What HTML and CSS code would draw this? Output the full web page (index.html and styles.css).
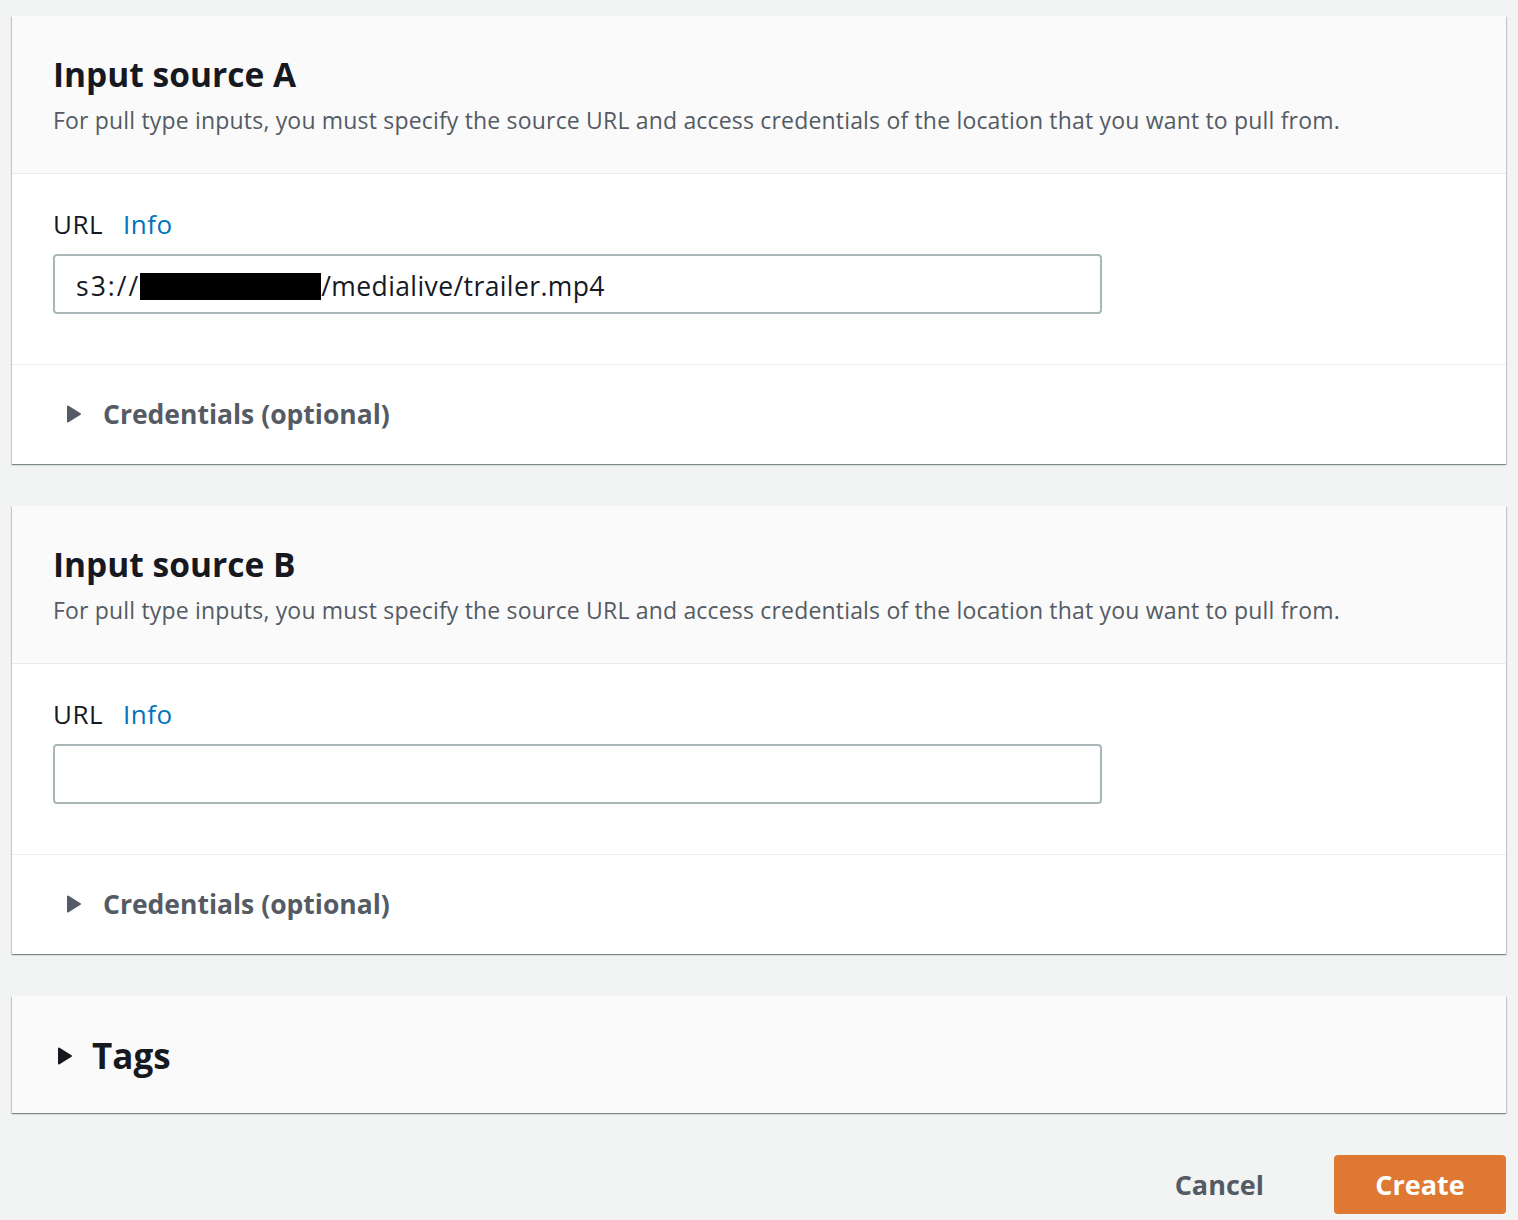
FILE: index.html
```html
<!DOCTYPE html>
<html lang="en">
<head>
<meta charset="utf-8">
<title>Create input</title>
<link rel="stylesheet" href="styles.css">
</head>
<body>
<main class="page">
  <section class="card">
    <header class="card-header">
      <h2 class="card-title">Input source A</h2>
      <p class="card-desc">For pull type inputs, you must specify the source URL and access credentials of the location that you want to pull from.</p>
    </header>
    <div class="card-body">
      <div class="field-label"><span class="label-text">URL</span><a class="info" href="#">Info</a></div>
      <div class="input"><span>s3://</span><span class="redact"></span><span>/medialive/trailer.mp4</span></div>
    </div>
    <div class="expander">
      <svg class="caret" viewBox="0 0 16 20" width="16" height="20"><path d="M2 2.5 L14 10 L2 17.5 Z" fill="currentColor" stroke="currentColor" stroke-width="2" stroke-linejoin="round"/></svg>
      <span class="expander-text">Credentials (optional)</span>
    </div>
  </section>

  <section class="card">
    <header class="card-header">
      <h2 class="card-title">Input source B</h2>
      <p class="card-desc">For pull type inputs, you must specify the source URL and access credentials of the location that you want to pull from.</p>
    </header>
    <div class="card-body">
      <div class="field-label"><span class="label-text">URL</span><a class="info" href="#">Info</a></div>
      <div class="input"></div>
    </div>
    <div class="expander">
      <svg class="caret" viewBox="0 0 16 20" width="16" height="20"><path d="M2 2.5 L14 10 L2 17.5 Z" fill="currentColor" stroke="currentColor" stroke-width="2" stroke-linejoin="round"/></svg>
      <span class="expander-text">Credentials (optional)</span>
    </div>
  </section>

  <section class="card card-tags">
    <div class="tags-row">
      <svg class="caret caret-dark" viewBox="0 0 16 20" width="16" height="20"><path d="M2 2.5 L14 10 L2 17.5 Z" fill="currentColor" stroke="currentColor" stroke-width="2" stroke-linejoin="round"/></svg>
      <span class="tags-text">Tags</span>
    </div>
  </section>

  <div class="actions">
    <button class="btn-link">Cancel</button>
    <button class="btn-primary">Create</button>
  </div>
</main>
</body>
</html>
```

FILE: styles.css
```css
* { box-sizing: border-box; }
html, body { margin: 0; padding: 0; }
body {
  background: #f2f3f3;
  font-family: "Open Sans", "Noto Sans", sans-serif;
  color: #16191f;
}
.page {
  padding: 16px 12px 0 12px;
  display: flex;
  flex-direction: column;
  gap: 42px;
}
.card {
  background: #ffffff;
  box-shadow: 0 1px 1px 0 rgba(0,28,36,0.3), 1px 1px 1px 0 rgba(0,28,36,0.15), -1px 1px 1px 0 rgba(0,28,36,0.15);
}
.card-header {
  background: #fafafa;
  border-bottom: 1px solid #eaeded;
  padding: 36px 41px 38px;
}
.card-title {
  margin: 0;
  font-size: 33.5px;
  line-height: 44px;
  font-weight: 700;
  color: #16191f;
}
.card-desc {
  margin: 9px 0 0;
  font-size: 23px;
  line-height: 30px;
  letter-spacing: 0.18px;
  color: #545b64;
}
.card-body {
  padding: 34px 41px 50px;
  border-bottom: 1px solid #eaeded;
}
.field-label {
  display: flex;
  align-items: center;
  gap: 20px;
  font-size: 26px;
  line-height: 32px;
  letter-spacing: 0.5px;
}
.label-text { color: #16191f; }
.info { color: #0073bb; text-decoration: none; }
.input {
  margin-top: 14px;
  width: 1049px;
  height: 60px;
  border: 2px solid #aab7b8;
  border-radius: 4px;
  display: flex;
  align-items: center;
  padding: 3px 20px 0 21px;
  font-size: 26.5px;
  letter-spacing: 0.4px;
  color: #16191f;
}
.input span:first-child { letter-spacing: 2px; }
.redact {
  display: inline-block;
  width: 181px;
  height: 27px;
  background: #000;
  margin-top: 2px;
}
.expander {
  display: flex;
  align-items: center;
  padding: 0 54px 2px;
  height: 99px;
  gap: 21px;
  color: #545b64;
}
.caret { color: #545b64; flex: none; }
.expander-text {
  font-size: 26.5px;
  line-height: 32px;
  font-weight: 700;
}
.card-tags { background: #fafafa; }
.tags-row {
  display: flex;
  align-items: center;
  height: 117px;
  padding: 2px 0 0 45px;
  gap: 19px;
}
.caret-dark { color: #16191f; }
.tags-text {
  font-size: 35px;
  font-weight: 700;
  line-height: 40px;
}
.actions {
  display: flex;
  justify-content: flex-end;
  align-items: center;
  gap: 48px;
}
.btn-link {
  background: none;
  border: none;
  font-family: inherit;
  font-size: 27px;
  font-weight: 700;
  color: #545b64;
  padding: 0 22px;
  height: 59px;
}
.btn-primary {
  background: #df7832;
  border: none;
  border-radius: 4px;
  color: #fff;
  font-family: inherit;
  font-size: 27px;
  font-weight: 700;
  width: 172px;
  height: 59px;
}
```
